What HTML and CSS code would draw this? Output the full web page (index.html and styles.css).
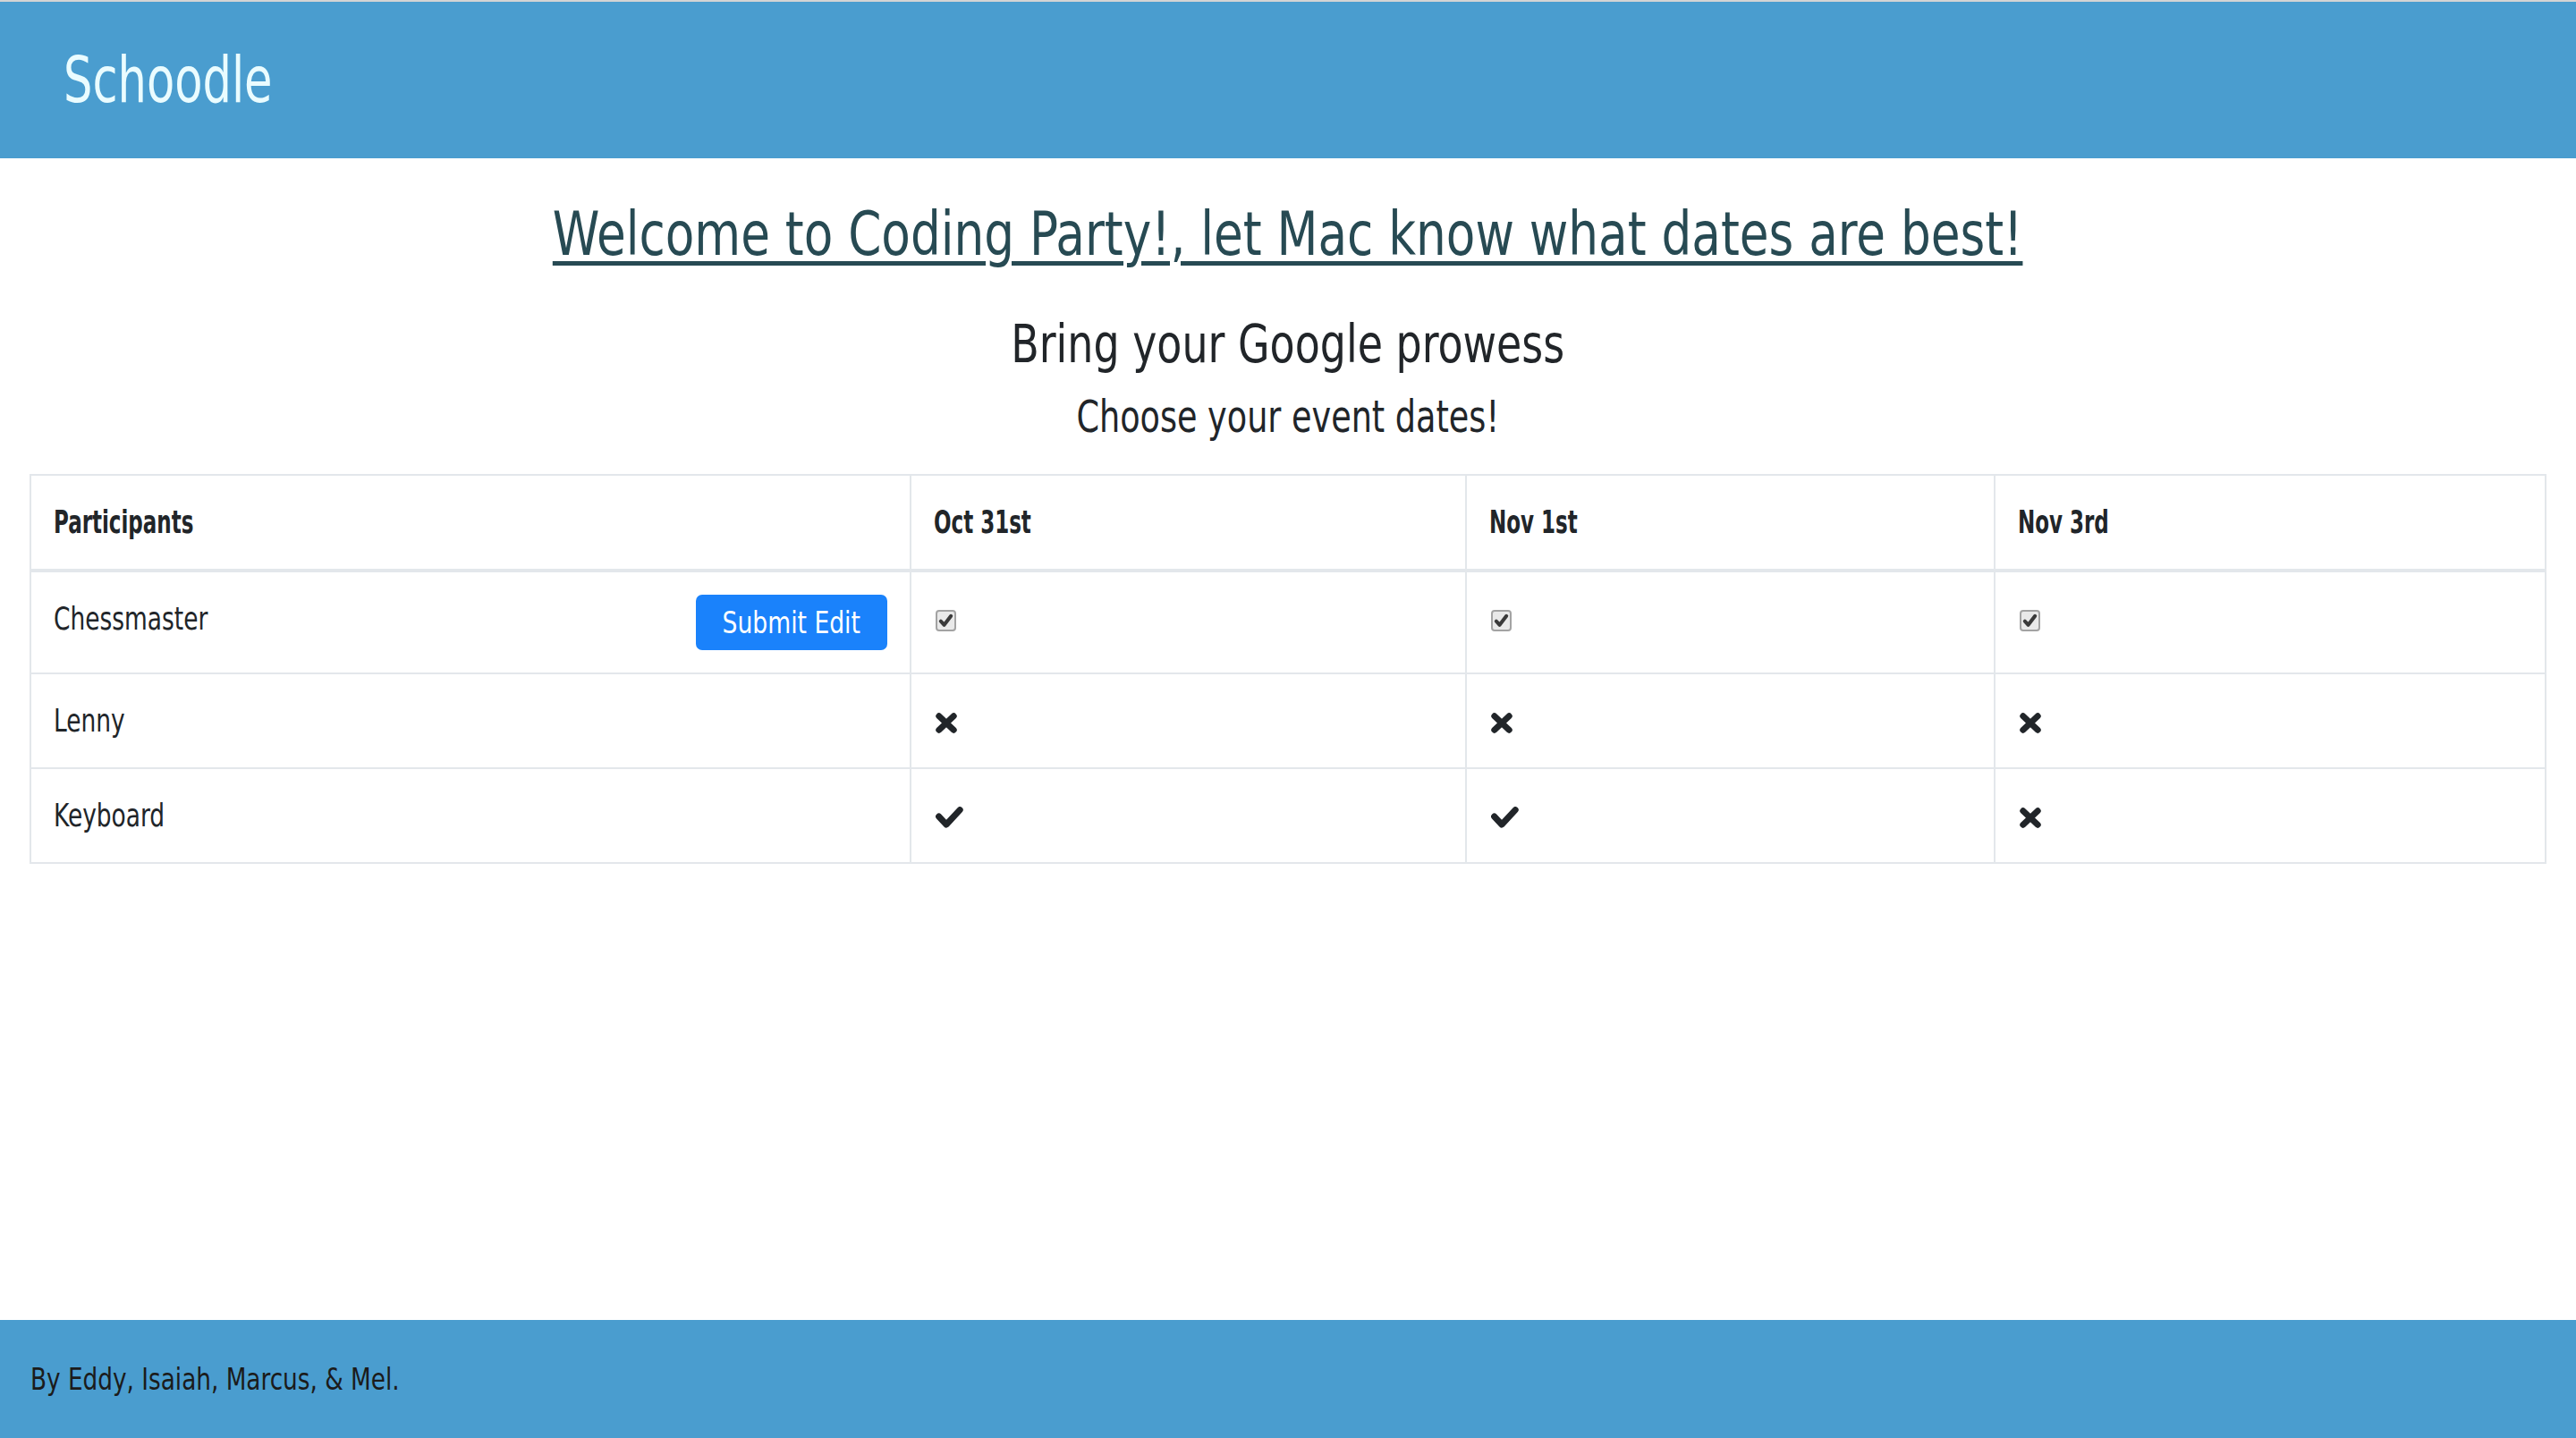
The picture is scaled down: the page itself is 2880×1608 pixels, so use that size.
FILE: index.html
```html
<!DOCTYPE html>
<html lang="en">
<head>
<meta charset="utf-8">
<title>Schoodle</title>
<link rel="stylesheet" href="styles.css">
</head>
<body>
<header class="site-header">
  <div class="brand">Schoodle</div>
</header>
<main class="content">
  <h1 class="event-title">Welcome to Coding Party!, let Mac know what dates are best!</h1>
  <h2 class="event-desc">Bring your Google prowess</h2>
  <h3 class="event-prompt">Choose your event dates!</h3>
  <table class="poll">
    <colgroup>
      <col class="c-name">
      <col class="c-d1">
      <col class="c-d2">
      <col class="c-d3">
    </colgroup>
    <thead>
      <tr>
        <th><span class="th-text">Participants</span></th>
        <th><span class="th-text">Oct 31st</span></th>
        <th><span class="th-text">Nov 1st</span></th>
        <th><span class="th-text">Nov 3rd</span></th>
      </tr>
    </thead>
    <tbody>
      <tr>
        <td><div class="name-edit"><span class="td-text">Chessmaster</span><button class="btn-submit" type="button"><span class="btn-text">Submit Edit</span></button></div></td>
        <td><span class="cbox"><svg viewBox="0 0 16 16"><polyline points="3.2,8.6 6.4,12 12.8,3.6"/></svg></span></td>
        <td><span class="cbox"><svg viewBox="0 0 16 16"><polyline points="3.2,8.6 6.4,12 12.8,3.6"/></svg></span></td>
        <td><span class="cbox"><svg viewBox="0 0 16 16"><polyline points="3.2,8.6 6.4,12 12.8,3.6"/></svg></span></td>
      </tr>
      <tr>
        <td><span class="td-text">Lenny</span></td>
        <td><svg class="ico-x" viewBox="0 0 24 23"><path d="M3.8 3.8L20.2 19.2M20.2 3.8L3.8 19.2"/></svg></td>
        <td><svg class="ico-x" viewBox="0 0 24 23"><path d="M3.8 3.8L20.2 19.2M20.2 3.8L3.8 19.2"/></svg></td>
        <td><svg class="ico-x" viewBox="0 0 24 23"><path d="M3.8 3.8L20.2 19.2M20.2 3.8L3.8 19.2"/></svg></td>
      </tr>
      <tr>
        <td><span class="td-text">Keyboard</span></td>
        <td><svg class="ico-check" viewBox="0 0 31 24"><polyline points="3.6,11 12,20 27.2,3.6"/></svg></td>
        <td><svg class="ico-check" viewBox="0 0 31 24"><polyline points="3.6,11 12,20 27.2,3.6"/></svg></td>
        <td><svg class="ico-x" viewBox="0 0 24 23"><path d="M3.8 3.8L20.2 19.2M20.2 3.8L3.8 19.2"/></svg></td>
      </tr>
    </tbody>
  </table>
</main>
<footer class="site-footer">
  <p class="credits">By Eddy, Isaiah, Marcus, &amp; Mel.</p>
</footer>
</body>
</html>
```

FILE: styles.css
```css
html, body {
  margin: 0;
  padding: 0;
}

body {
  min-height: 100vh;
  display: flex;
  flex-direction: column;
  font-family: "DejaVu Sans Condensed", "DejaVu Sans", "Liberation Sans", sans-serif;
  font-stretch: condensed;
  color: #212529;
  background: #ffffff;
}

.site-header {
  border-top: 2px solid #d4d4d4;
  background: #4a9dcf;
  height: 175px;
  display: flex;
  align-items: center;
  padding-left: 71px;
}

.brand {
  font-size: 71px;
  line-height: 80px;
  color: #eafcff;
  transform: scaleX(0.8);
  transform-origin: left center;
}

.content {
  display: flex;
  flex-direction: column;
  align-items: center;
}

.event-title {
  margin: 45px 0 0;
  font-size: 68px;
  line-height: 80px;
  font-weight: normal;
  color: #274a53;
  text-decoration: underline;
  text-decoration-thickness: 5px;
  text-underline-offset: 7px;
  transform: scaleX(0.87);
}

.event-desc {
  margin: 48px 0 0;
  font-size: 58px;
  line-height: 70px;
  font-weight: normal;
  transform: scaleX(0.88);
}

.event-prompt {
  margin: 17px 0 0;
  font-size: 49px;
  line-height: 60px;
  font-weight: normal;
  transform: scaleX(0.83);
}

.poll {
  margin-top: 33px;
  width: 2812px;
  table-layout: fixed;
  border-collapse: collapse;
  font-size: 35px;
  line-height: 54px;
}

.c-name { width: 984px; }
.c-d1 { width: 621px; }
.c-d2 { width: 591px; }
.c-d3 { width: 616px; }

.poll th,
.poll td {
  border: 2px solid #e3e7eb;
  padding: 25px;
  text-align: left;
  vertical-align: top;
}

.poll th {
  font-weight: bold;
}

.poll thead th {
  border-bottom: 4px solid #e3e7eb;
}

.th-text,
.td-text {
  display: inline-block;
  transform-origin: left center;
}

.th-text {
  transform: scaleX(0.73);
}

.td-text {
  transform: scaleX(0.84);
}

.name-edit {
  display: flex;
  justify-content: space-between;
  align-items: flex-start;
}

.btn-submit {
  font-family: inherit;
  font-stretch: condensed;
  font-size: 34px;
  line-height: 62px;
  width: 214px;
  height: 62px;
  padding: 0;
  border: none;
  border-radius: 7px;
  background: #1a82fb;
  color: #ffffff;
  text-align: center;
}

.btn-text {
  display: inline-block;
  transform: scaleX(0.87);
  transform-origin: center;
  margin-top: -4px;
}

.cbox {
  display: inline-block;
  vertical-align: middle;
  box-sizing: border-box;
  width: 23px;
  height: 24px;
  border: 2px solid #a3a3a3;
  border-radius: 4px;
  background: #e9e9e9;
  margin-left: 2px;
}

.cbox svg {
  display: block;
  width: 19px;
  height: 20px;
  fill: none;
  stroke: #3a3a3a;
  stroke-width: 3.4;
  stroke-linecap: round;
  stroke-linejoin: round;
}

.ico-x {
  display: inline-block;
  vertical-align: middle;
  width: 24px;
  height: 23px;
  fill: none;
  stroke: #212529;
  stroke-width: 7;
  stroke-linecap: round;
  margin-left: 2px;
}

.ico-check {
  display: inline-block;
  vertical-align: middle;
  width: 31px;
  height: 24px;
  fill: none;
  stroke: #212529;
  stroke-width: 7;
  stroke-linecap: round;
  stroke-linejoin: round;
  margin-left: 2px;
}

.site-footer {
  margin-top: auto;
  background: #4a9dcf;
  height: 132px;
  display: flex;
  align-items: center;
  padding-left: 34px;
}

.credits {
  margin: 0;
  font-size: 34px;
  line-height: 40px;
  color: #1b1b1b;
  transform: scaleX(0.86);
  transform-origin: left center;
}
```
